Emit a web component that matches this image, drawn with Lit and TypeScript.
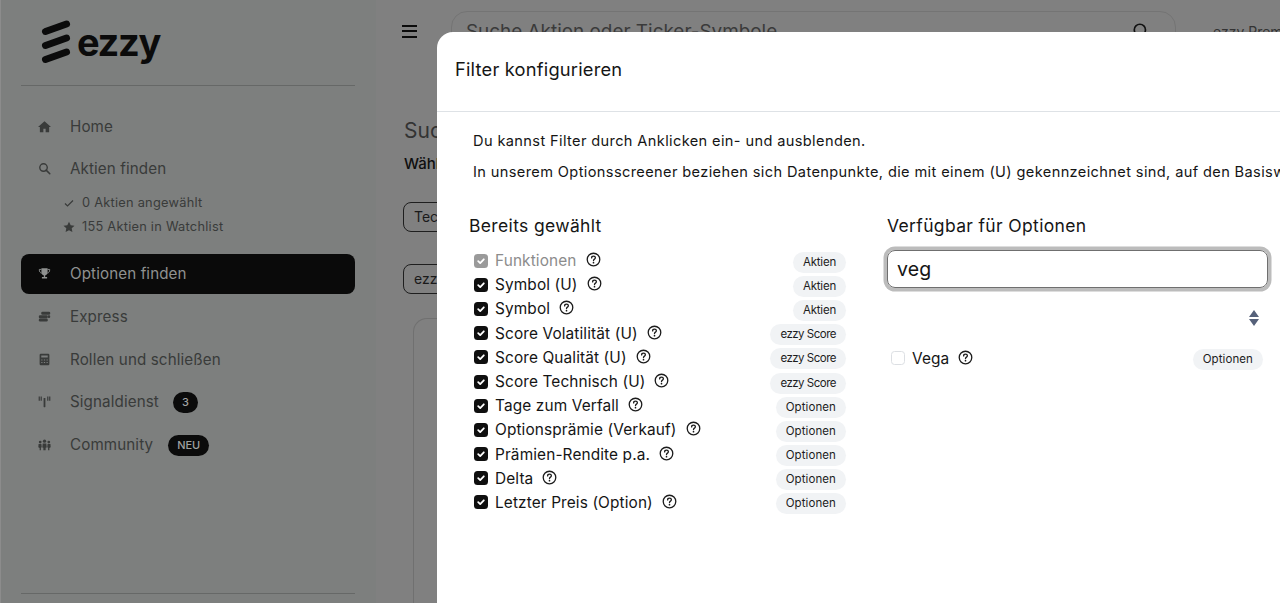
import { LitElement, html, css, svg } from 'lit';
import { customElement } from 'lit/decorators.js';

const ICONS: Record<string, unknown> = {
  home: svg`<path d="M8 1.500 0 8.700h2.300V15h4.300v-4.200h2.800V15h4.300V8.700H16z"/>`,
  search: svg`<circle cx="6.800" cy="6.800" r="4.600" fill="none" stroke="currentColor" stroke-width="1.700"/><path d="m10 10 4.500 4.500" fill="none" stroke="currentColor" stroke-width="1.900" stroke-linecap="round"/>`,
  trophy: svg`<path d="M4.200 1.500h7.600v5c0 2.200-1.600 3.600-3 3.900v1.800h2.400V14H4.800v-1.800h2.400v-1.800c-1.400-.3-3-1.700-3-3.900z"/><path d="M4.200 3H1.600c0 2.800 1 4.200 3 4.600M11.800 3h2.600c0 2.800-1 4.200-3 4.600" fill="none" stroke="currentColor" stroke-width="1.100"/>`,
  coins: svg`<rect x="1" y="10.500" width="11" height="3.600" rx="1.500"/><rect x="1" y="6.400" width="11" height="3.600" rx="1.500"/><rect x="4" y="2" width="11" height="3.800" rx="1.500"/><rect x="12" y="6.400" width="3" height="3.400" rx="1.200"/>`,
  calc: svg`<path fill-rule="evenodd" d="M3.500 1h9A1.500 1.500 0 0 1 14 2.500v11a1.500 1.500 0 0 1-1.500 1.500h-9A1.500 1.500 0 0 1 2 13.500v-11A1.500 1.500 0 0 1 3.500 1zM4 3v2.500h8V3zm0 5v1.300h1.500V8zm3.200 0v1.300h1.600V8zm3.300 0v1.300H12V8zM4 11v1.300h1.500V11zm3.200 0v1.300h1.600V11zm3.300 0v1.300H12V11z"/>`,
  antenna: svg`<rect x="6.900" y="3.600" width="2.200" height="11.400" rx=".6"/><path d="M.8 1.800h1.500v5.400H.8zM3.200 1.800h1.500v5.400H3.200zM11.300 1.800h1.500v5.400h-1.500zM13.700 1.800h1.500v5.400h-1.500z"/>`,
  people: svg`<circle cx="8" cy="3.900" r="2"/><circle cx="2.700" cy="5" r="1.700"/><circle cx="13.300" cy="5" r="1.700"/><path d="M5.800 6.700h4.400l.5 4.900-1.300.5V15H6.600v-2.900l-1.300-.5zM.7 7.300h3.500l.4 4.100-1 .6V15H2v-2.800l-1.600-.7zM11.800 7.300h3.500l.3 4.200-1.600.7V15h-1.600v-3l-1-.6z"/>`,
};

const icon = (name: string) =>
  html`<svg class="nav-icon" viewBox="0 0 16 16" fill="currentColor">${ICONS[name]}</svg>`;

const helpIcon = html`<svg class="help" viewBox="0 0 16 16" fill="none" stroke="currentColor">
  <circle cx="8" cy="8" r="6.700" stroke-width="1.400"/>
  <path d="M6 6.300c0-1.200.9-1.900 2-1.900s2 .7 2 1.700c0 1.500-2 1.500-2 3" stroke-width="1.400" stroke-linecap="round"/>
  <circle cx="8" cy="11.400" r=".9" fill="currentColor" stroke="none"/>
</svg>`;

const checkMark = html`<svg viewBox="0 0 14 14" fill="none" stroke="#fff" stroke-width="1.800" stroke-linecap="round" stroke-linejoin="round">
  <path d="m4.200 7.200 2 1.900 3.600-3.800"/>
</svg>`;

const SELECTED: [string, string][] = [
  ['Funktionen', 'Aktien'],
  ['Symbol (U)', 'Aktien'],
  ['Symbol', 'Aktien'],
  ['Score Volatilität (U)', 'ezzy Score'],
  ['Score Qualität (U)', 'ezzy Score'],
  ['Score Technisch (U)', 'ezzy Score'],
  ['Tage zum Verfall', 'Optionen'],
  ['Optionsprämie (Verkauf)', 'Optionen'],
  ['Prämien-Rendite p.a.', 'Optionen'],
  ['Delta', 'Optionen'],
  ['Letzter Preis (Option)', 'Optionen'],
];

const TAG_CLASS: Record<string, string> = {
  Aktien: 'tag aktien',
  'ezzy Score': 'tag score',
  Optionen: 'tag',
};

@customElement('app-root')
export class AppRoot extends LitElement {
  static styles = css`
    :host {
      display: block;
      height: 603px;
      font-family: 'Inter', 'Liberation Sans', sans-serif;
    }

    .page {
      position: relative;
      display: flex;
      height: 603px;
      overflow: hidden;
      background: #808080;
      color: #0e0e0e;
    }

    /* sidebar */
    .sidebar {
      flex: 0 0 376px;
      box-sizing: border-box;
      display: flex;
      flex-direction: column;
      height: 603px;
      padding: 0 21px 0 20px;
      border-left: 1px solid #8c8c8c;
      background: #7d7f7e;
      color: #393b3a;
    }

    .logo {
      display: flex;
      align-items: center;
      gap: 4px;
      height: 85px;
      padding-left: 20px;
      border-bottom: 1px solid #666867;
      color: #0b0b0b;
    }

    .logo svg {
      width: 32px;
      height: 46px;
      margin-top: 1px;
    }

    .logo span {
      font-size: 38px;
      font-weight: 700;
      letter-spacing: -1.300px;
      line-height: 46px;
      margin-top: -2px;
    }

    nav {
      flex: 1;
      display: flex;
      flex-direction: column;
      padding-top: 19px;
    }

    .item {
      display: flex;
      align-items: center;
      height: 42.500px;
      padding-left: 17px;
      font-size: 15.200px;
      letter-spacing: 0.100px;
      white-space: nowrap;
    }

    .item.active {
      height: 40px;
      margin: 0 0 2px;
      background: #0a0a0a;
      border-radius: 8px;
      color: #8f9190;
    }

    .nav-icon {
      flex: none;
      width: 13px;
      height: 13px;
      margin-right: 19px;
    }

    .sub {
      display: flex;
      flex-direction: column;
      padding: 0.500px 0 15px 42px;
      font-size: 12.800px;
      letter-spacing: 0.250px;
    }

    .sub div {
      display: flex;
      align-items: center;
      gap: 7px;
      height: 24px;
    }

    .sub svg {
      width: 12px;
      height: 12px;
    }

    .count {
      margin: 2px 0 0 14px;
      padding: 0 9px;
      height: 21px;
      line-height: 21px;
      border-radius: 11px;
      background: #0b0b0b;
      color: #a0a2a1;
      font-size: 11px;
      font-weight: 500;
      letter-spacing: 0;
    }

    .count.new {
      margin-left: 15px;
    }

    .sidebar-end {
      height: 9px;
      border-top: 1px solid #666867;
    }

    /* main page behind the dialog */
    main {
      flex: 1;
      min-width: 0;
      padding: 11px 0 0 27px;
      display: flex;
      flex-direction: column;
    }

    .topbar {
      display: flex;
      align-items: center;
      height: 40px;
      white-space: nowrap;
    }

    .burger {
      width: 15px;
      height: 13px;
      margin: 0 34px 0 -1px;
      border-top: 2px solid #0b0b0b;
      border-bottom: 2px solid #0b0b0b;
      box-sizing: border-box;
      position: relative;
      flex: none;
    }

    .burger::after {
      content: '';
      position: absolute;
      left: 0;
      right: 0;
      top: 3.500px;
      height: 2px;
      background: #0b0b0b;
    }

    .search {
      flex: 0 0 725px;
      box-sizing: border-box;
      height: 40px;
      display: flex;
      align-items: center;
      justify-content: space-between;
      padding: 0 25px 0 14px;
      border: 1px solid #747474;
      border-radius: 16px;
      color: #3a3a3a;
      font-size: 18.900px;
    }

    .search svg {
      width: 18px;
      height: 18px;
    }

    .user {
      margin-left: 37px;
      font-size: 14px;
      color: #333;
    }

    .title {
      margin: 67px 0 0 1px;
      font-size: 21px;
      font-weight: 400;
      color: #333;
    }

    .lead {
      margin: 11px 0 0 1px;
      font-size: 15px;
      font-weight: 500;
    }

    .chip {
      align-self: flex-start;
      box-sizing: border-box;
      height: 30px;
      line-height: 28px;
      width: 120px;
      padding-left: 10px;
      border: 1px solid #1e1e1e;
      border-radius: 8px;
      font-size: 14px;
      color: #1a1a1a;
    }

    .chip.first {
      margin-top: 29px;
    }

    .chip.second {
      margin-top: 32px;
    }

    .card {
      flex: 1;
      margin: 24px 0 0 10px;
      border: 1px solid #707070;
      border-radius: 14px 0 0 0;
      border-right: 0;
      border-bottom: 0;
    }

    /* dialog */
    .modal {
      position: absolute;
      left: 437px;
      top: 32px;
      width: 1100px;
      height: 640px;
      background: #fff;
      border-radius: 16px 16px 0 0;
      color: #151515;
    }

    .modal-head {
      box-sizing: border-box;
      height: 80px;
      padding: 25px 18px 0;
      border-bottom: 1px solid #dee2e6;
      font-size: 18.300px;
      line-height: 24px;
      font-weight: 400;
      letter-spacing: 0.200px;
    }

    .modal-body {
      padding: 19px 0 0 36px;
      font-size: 14.600px;
      white-space: nowrap;
    }

    .modal-body p {
      margin: 0;
      height: 31px;
      line-height: 21px;
      letter-spacing: 0.370px;
    }

    .columns {
      display: grid;
      grid-template-columns: 377px 381px;
      gap: 41px;
      margin: 20.500px 0 0 -4px;
    }

    h3 {
      margin: 0;
      height: 35px;
      font-size: 17.500px;
      line-height: 24px;
      font-weight: 400;
      letter-spacing: 0.350px;
    }

    .rows {
      display: flex;
      flex-direction: column;
      padding-left: 5px;
    }

    .row {
      display: flex;
      align-items: center;
      height: 24.200px;
      font-size: 15.400px;
      letter-spacing: 0.120px;
    }

    .row.locked {
      color: #8c8c8c;
    }

    .box {
      flex: none;
      box-sizing: border-box;
      width: 14px;
      height: 14px;
      margin-right: 7px;
      border-radius: 3.500px;
      background: #0f0f0f;
    }

    .box svg {
      display: block;
    }

    .locked .box {
      background: #9a9a9a;
    }

    .box.empty {
      background: #fff;
      border: 1px solid #dcdfe3;
    }

    .help {
      flex: none;
      width: 15px;
      height: 15px;
      margin-left: 9px;
      margin-top: -2px;
      color: #1c1c1c;
    }

    .tag {
      margin: 3px 0 0 auto;
      height: 21px;
      line-height: 21px;
      padding: 0 10px;
      border-radius: 11px;
      background: #f1f3f5;
      color: #1d1d1d;
      font-size: 11.500px;
      letter-spacing: 0.100px;
    }

    .tag.aktien {
      letter-spacing: -0.200px;
    }

    .tag.score {
      letter-spacing: -0.500px;
    }

    .filter {
      box-sizing: border-box;
      height: 38px;
      margin: 1.500px 0 0;
      padding: 0 9px;
      line-height: 36px;
      border: 1px solid #6f6f6f;
      border-radius: 8px;
      box-shadow: 0 0 0 3.500px #bcbcbc;
      font-size: 19.500px;
      letter-spacing: 0.200px;
    }

    .sort {
      display: flex;
      justify-content: flex-end;
      padding: 22px 9px 0 0;
      height: 20px;
    }

    .sort svg {
      width: 10px;
      height: 16px;
      fill: #56617a;
    }

    .available {
      margin: 16px 5px 0 4px;
      padding-left: 0;
    }

    .available .tag {
      margin-top: 2px;
    }
  `;

  render() {
    return html`
      <div class="page">
        <aside class="sidebar">
          <div class="logo">
            <svg viewBox="0 0 32 46" fill="none" stroke="#0b0b0b" stroke-width="7" stroke-linecap="round">
              <path d="M4.500 11.500 25.500 4"/>
              <path d="M4.500 25.500 25.500 18"/>
              <path d="M4.500 39.500 25.500 32"/>
            </svg>
            <span>ezzy</span>
          </div>
          <nav>
            <div class="item">${icon('home')}Home</div>
            <div class="item">${icon('search')}Aktien finden</div>
            <div class="sub">
              <div>
                <svg viewBox="0 0 12 12" fill="none" stroke="currentColor" stroke-width="1.200"><path d="m2 6.500 2.500 2.500L10 3.500"/></svg>
                0 Aktien angewählt
              </div>
              <div>
                <svg viewBox="0 0 12 12" fill="currentColor"><path d="m6 .8 1.700 3.400 3.800.5-2.800 2.600.7 3.800L6 9.300l-3.400 1.800.7-3.800L.5 4.700l3.800-.5z"/></svg>
                155 Aktien in Watchlist
              </div>
            </div>
            <div class="item active">${icon('trophy')}Optionen finden</div>
            <div class="item">${icon('coins')}Express</div>
            <div class="item">${icon('calc')}Rollen und schließen</div>
            <div class="item">${icon('antenna')}Signaldienst<span class="count">3</span></div>
            <div class="item">${icon('people')}Community<span class="count new">NEU</span></div>
          </nav>
          <div class="sidebar-end"></div>
        </aside>

        <main>
          <div class="topbar">
            <div class="burger"></div>
            <div class="search">
              <span>Suche Aktion oder Ticker-Symbole</span>
              <svg viewBox="0 0 16 16" fill="none" stroke="#111" stroke-width="1.500"><circle cx="7" cy="7" r="5"/><path d="m11 11 4 4"/></svg>
            </div>
            <span class="user">ezzy Premium</span>
          </div>
          <h2 class="title">Suche</h2>
          <div class="lead">Wähle</div>
          <div class="chip first">Technisch</div>
          <div class="chip second">ezzy Score</div>
          <div class="card"></div>
        </main>

        <section class="modal">
          <div class="modal-head">Filter konfigurieren</div>
          <div class="modal-body">
            <p>Du kannst Filter durch Anklicken ein- und ausblenden.</p>
            <p>In unserem Optionsscreener beziehen sich Datenpunkte, die mit einem (U) gekennzeichnet sind, auf den Basiswert der Option.</p>
            <div class="columns">
              <div>
                <h3>Bereits gewählt</h3>
                <div class="rows">
                  ${SELECTED.map(
                    ([label, tag], i) => html`
                      <div class="row ${i === 0 ? 'locked' : ''}">
                        <span class="box">${checkMark}</span>${label}${helpIcon}
                        <span class=${TAG_CLASS[tag]}>${tag}</span>
                      </div>
                    `
                  )}
                </div>
              </div>
              <div>
                <h3>Verfügbar für Optionen</h3>
                <div class="filter">veg</div>
                <div class="sort">
                  <svg viewBox="0 0 10 16"><path d="M5 0 10 7H0zM5 16 0 9h10z"/></svg>
                </div>
                <div class="rows available">
                  <div class="row">
                    <span class="box empty"></span>Vega${helpIcon}
                    <span class="tag">Optionen</span>
                  </div>
                </div>
              </div>
            </div>
          </div>
        </section>
      </div>
    `;
  }
}

declare global {
  interface HTMLElementTagNameMap {
    'app-root': AppRoot;
  }
}
